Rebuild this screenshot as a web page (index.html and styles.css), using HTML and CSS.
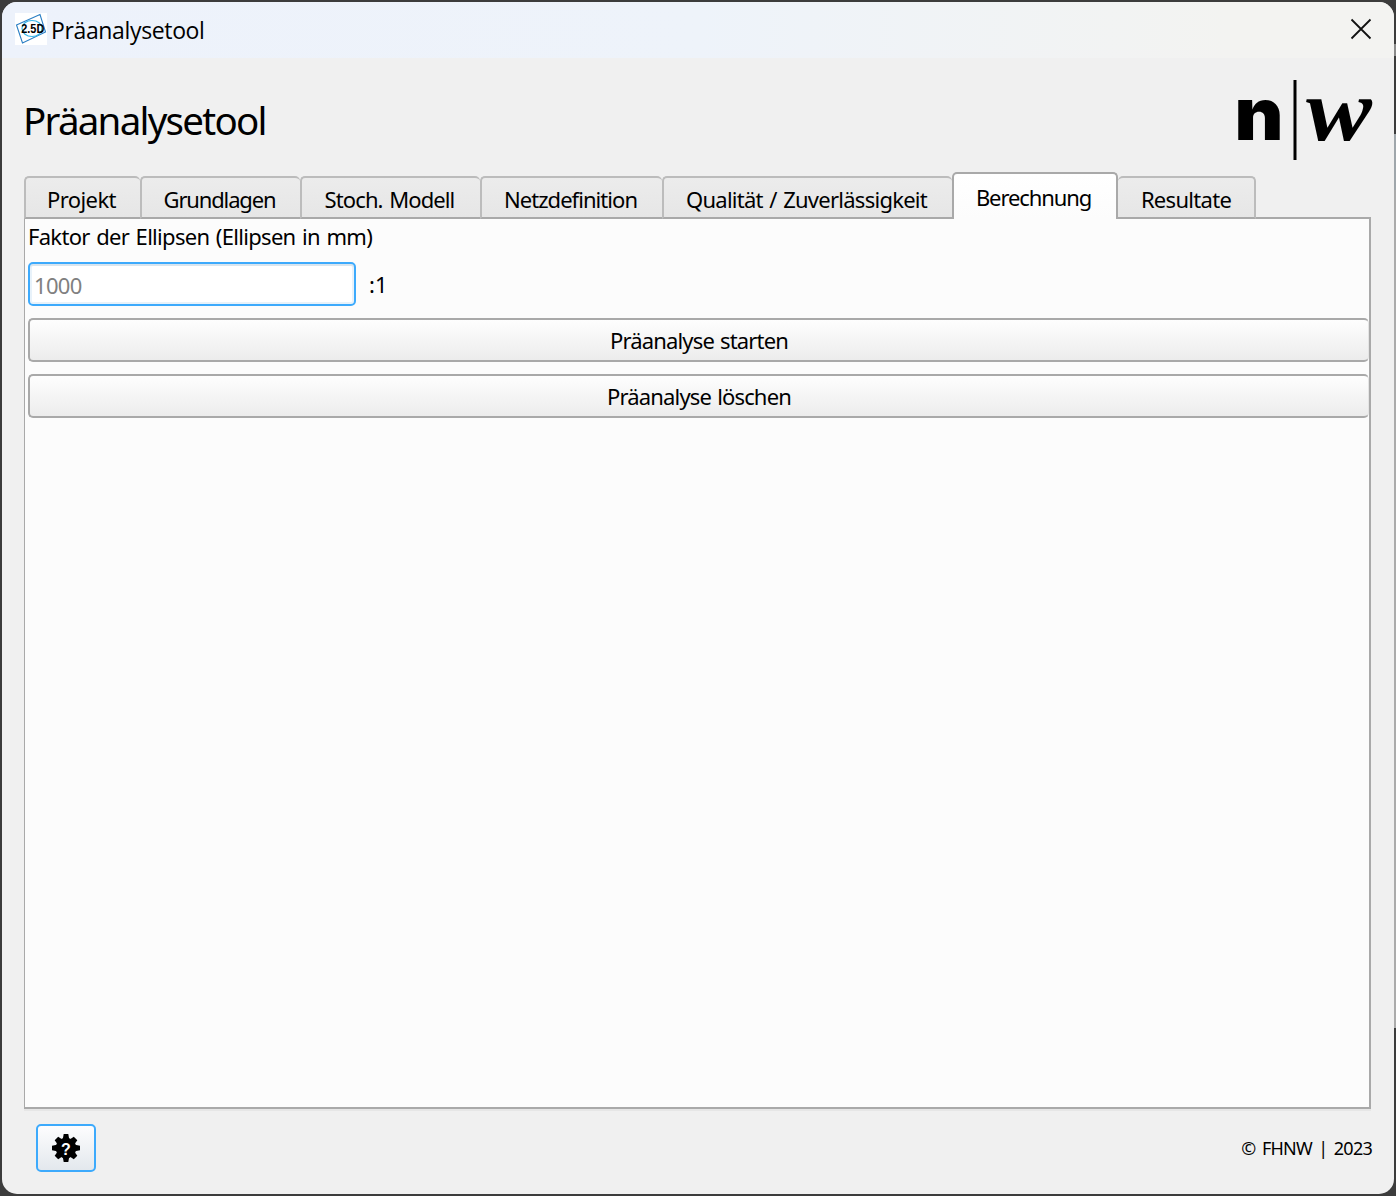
FILE: index.html
```html
<!DOCTYPE html>
<html lang="de">
<head>
<meta charset="utf-8">
<title>Präanalysetool</title>
<link rel="stylesheet" href="styles.css">
</head>
<body>
<div class="window">
  <header class="titlebar">
    <svg class="app-icon" width="32" height="32" viewBox="0 0 32 32">
      <rect width="32" height="32" fill="#fff"/>
      <path d="M1.5 12 25 1.5 30.5 19 7.500 30Z" fill="none" stroke="#2b7fc4" stroke-width="1.1"/>
      <ellipse cx="17" cy="15.500" rx="10" ry="8" fill="none" stroke="#35b5e8" stroke-width="1.2"/>
      <text class="icon-text" x="6.300" y="19.500" textLength="23" lengthAdjust="spacingAndGlyphs">2.5D</text>
    </svg>
    <span class="caption">Präanalysetool</span>
    <svg class="close" width="22" height="22" viewBox="0 0 22 22"><path d="M1.500 1.500 20.500 20.500M20.500 1.500 1.500 20.500" stroke="#111" stroke-width="1.800" fill="none"/></svg>
  </header>
  <div class="heading-row">
    <h1 class="heading">Präanalysetool</h1>
    <svg class="logo" width="140" height="114" viewBox="0 -22 140 114">
      <text class="logo-n" x="0.500" y="60" textLength="49" lengthAdjust="spacingAndGlyphs">n</text>
      <path d="M61 0V80" stroke="#000" stroke-width="3"/>
      <text class="logo-w" x="72" y="60" textLength="66" lengthAdjust="spacingAndGlyphs">w</text>
    </svg>
  </div>
  <nav class="tabs">
    <div class="tab t1"><span>Projekt</span></div>
    <div class="tab t2"><span>Grundlagen</span></div>
    <div class="tab t3"><span>Stoch. Modell</span></div>
    <div class="tab t4"><span>Netzdefinition</span></div>
    <div class="tab t5"><span>Qualität / Zuverlässigkeit</span></div>
    <div class="tab t6 active"><span>Berechnung</span></div>
    <div class="tab t7"><span>Resultate</span></div>
  </nav>
  <main class="panel">
    <label class="label" for="factor">Faktor der Ellipsen (Ellipsen in mm)</label>
    <div class="factor-row">
      <input class="factor" id="factor" placeholder="1000">
      <span class="ratio">:1</span>
    </div>
    <button class="action">Präanalyse starten</button>
    <button class="action">Präanalyse löschen</button>
  </main>
  <footer class="footer">
    <button class="help" aria-label="Hilfe">
      <svg width="28" height="28" viewBox="-14 -14 28 28">
        <circle r="10.300"/>
        <path d="M-3.200-9 -2.300-14H2.300L3.200-9ZM-3.200 9-2.300 14H2.300L3.200 9ZM-9-3.200-14-2.300V2.300L-9 3.200ZM9-3.200 14-2.300V2.300L9 3.200Z"/>
        <path transform="rotate(45)" d="M-3.200-9 -2.500-13.500H2.500L3.200-9ZM-3.200 9-2.500 13.500H2.500L3.200 9ZM-9-3.200-13.500-2.500V2.500L-9 3.200ZM9-3.200 13.500-2.500V2.500L9 3.200Z"/>
        <text class="gear-text" x="0" y="6.500" text-anchor="middle">?</text>
      </svg>
    </button>
    <span class="copyright">© FHNW | 2023</span>
  </footer>
</div>
</body>
</html>
```
FILE: styles.css
```css
* { box-sizing: border-box; }
body {
  margin: 0;
  padding: 2px;
  height: 1196px;
  overflow: hidden;
  background:
    linear-gradient(#3c3c3c 0 44px, #8a8a8a 44px 56px, #3c3c3c 56px 134px, #9fa6ab 134px 190px, #ababab 190px 1028px, #3c3c3c 1028px) right / 2px 100% no-repeat,
    #3c3c3c;
  color: #000;
  font: 22px/26px "Noto Sans", sans-serif;
}
.window {
  height: 1192px;
  display: flex;
  flex-direction: column;
  overflow: hidden;
  border-radius: 15px;
  background: #f0f0f0;
}
.titlebar {
  height: 56px;
  flex: none;
  display: flex;
  align-items: center;
  padding: 0 22px 2px 13px;
  background: linear-gradient(90deg, #edf2fb, #eef3fa 50%, #f3f3f1 88%);
}
.caption {
  margin-left: 4px;
  padding-top: 2px;
  font-size: 23px;
  font-family: "Open Sans", sans-serif;
  letter-spacing: -0.36px;
}
.close { margin-left: auto; }
.icon-text { font: bold 12px "Liberation Sans", sans-serif; }
.heading-row {
  height: 114px;
  flex: none;
  display: flex;
  justify-content: space-between;
  padding: 0 20px 0 21px;
}
.heading {
  margin: 0;
  padding-top: 21px;
  font-size: 38.5px;
  font-weight: 400;
  line-height: 82px;
  letter-spacing: -1.75px;
}
.logo-n { font: 900 73px Inter, sans-serif; }
.logo-w { font: italic bold 88px "Liberation Serif", serif; }
.tabs {
  height: 47px;
  flex: none;
  display: flex;
  align-items: flex-end;
  padding-left: 22px;
  margin-bottom: -2px;
  z-index: 1;
}
.tab {
  height: 43px;
  display: flex;
  justify-content: center;
  align-items: center;
  padding: 2px 3px 0 0;
  border: 2px solid #bcbcbc;
  border-bottom-color: #a9a9a9;
  border-right: 0;
  border-radius: 5px 5px 0 0;
  background: linear-gradient(#ececec, #e6e6e6);
  white-space: nowrap;
}
.t1 { width: 116px; letter-spacing: -0.6px; }
.t2 { width: 160px; letter-spacing: -1.15px; }
.t3 { width: 180px; letter-spacing: -0.9px; word-spacing: 1.8px; }
.t4 { width: 182px; letter-spacing: -0.95px; }
.t5 { width: 290px; letter-spacing: -0.74px; word-spacing: 1.5px; }
.t6 { width: 166px; letter-spacing: -1.1px; }
.t7 { width: 138px; padding-right: 0; letter-spacing: -0.7px; border-right: 2px solid #bcbcbc; border-left: 0; }
.active {
  height: 47px;
  padding-bottom: 2px;
  border: 2px solid #a9a9a9;
  border-bottom: 0;
  background: linear-gradient(#fff, #fcfcfc);
}
.panel {
  height: 892px;
  flex: none;
  margin: 0 23px 0 22px;
  padding: 4px 0 0 3px;
  display: flex;
  flex-direction: column;
  border: 2px solid #a9a9a9;
  border-left-width: 1px;
  background: #fcfcfc;
  box-shadow: 0 2px 0 #e6e6e6;
}
.label {
  height: 39px;
  line-height: 26px;
  letter-spacing: -0.7px;
  word-spacing: 1.5px;
}
.factor-row { display: flex; align-items: center; gap: 13px; height: 44px; }
.factor {
  width: 328px;
  height: 44px;
  padding: 2px 4px 0;
  border: 2px solid #3daafc;
  border-radius: 5px;
  background: #fff;
  box-shadow: inset 0 2px #d9e5ee, inset 0 0 0 2px #e8f2fa;
  font: inherit;
  letter-spacing: -0.7px;
}
.factor::placeholder { color: #808080; }
.action {
  height: 44px;
  margin: 12px 0 0;
  padding: 0;
  border: 2px solid #a9a9a9;
  border-right: 1px solid #e4e4e4;
  border-radius: 5px;
  background: linear-gradient(#fefefe, #ececec);
  color: #000;
  font: inherit;
  letter-spacing: -0.84px;
  word-spacing: 1.2px;
}
.footer {
  flex: 1;
  display: flex;
  justify-content: space-between;
  padding: 15px 22px 0 34px;
}
.help {
  width: 60px;
  height: 48px;
  padding: 0;
  display: flex;
  align-items: center;
  justify-content: center;
  border: 2px solid #3daafc;
  border-radius: 5px;
  background: linear-gradient(#fdfdfe, #e3e8ed);
}
.gear-text { font: bold 16px "Liberation Sans", sans-serif; fill: #fff; }
.copyright {
  font-size: 18px;
  line-height: 48px;
  letter-spacing: -0.75px;
  word-spacing: 2.4px;
}
```
